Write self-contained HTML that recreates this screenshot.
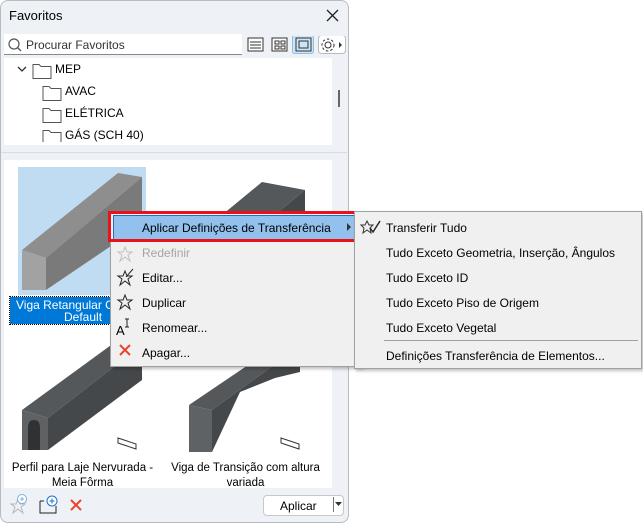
<!DOCTYPE html>
<html><head><meta charset="utf-8"><style>
*{margin:0;padding:0;box-sizing:border-box}
body{width:643px;height:523px;background:#fff;font-family:"Liberation Sans",sans-serif;font-size:12px;color:#000;position:relative;overflow:hidden}
.abs{position:absolute;white-space:nowrap}
.panel{left:0;top:0;width:349px;height:523px;background:#eef1f5;border:1px solid #b8bcc2;border-radius:8px}
.menu{background:#f0f0f0;border:1px solid #a0a0a0;box-shadow:2px 2px 3px rgba(0,0,0,.25)}
.t{font-size:12px}
.lbl{position:absolute;text-align:center;font-size:11.5px;line-height:15px;white-space:nowrap}
</style></head><body>
<div class="abs panel"></div>
<div class="abs" style="left:9px;top:8px;font-size:13px">Favoritos</div>
<svg class="abs" style="left:326px;top:9px" width="13" height="13"><path d="M1 1L12 12M12 1L1 12" stroke="#222" stroke-width="1.3"/></svg>
<div class="abs" style="left:4px;top:34px;width:238px;height:21px;background:#fff;border-bottom:1px solid #888"></div>
<svg class="abs" style="left:7px;top:37px" width="16" height="16"><circle cx="7" cy="7" r="5" fill="none" stroke="#555" stroke-width="1.2"/><path d="M10.5 10.5L14 14" stroke="#555" stroke-width="1.3"/></svg>
<div class="abs" style="left:26px;top:38px;color:#333">Procurar Favoritos</div>
<svg class="abs" style="left:247px;top:36px" width="100" height="18">
<rect x="1" y="2" width="15" height="13" fill="#fff" stroke="#333"/><path d="M3 6h11M3 9h11M3 12h11" stroke="#333"/>
<rect x="25" y="2" width="15" height="13" fill="#fff" stroke="#333"/><rect x="28" y="5" width="4" height="3" fill="none" stroke="#333"/><rect x="34" y="5" width="4" height="3" fill="none" stroke="#333"/><rect x="28" y="10" width="4" height="3" fill="none" stroke="#333"/><rect x="34" y="10" width="4" height="3" fill="none" stroke="#333"/>
<rect x="45.5" y="-0.5" width="21" height="18" rx="2" fill="#cce4f7" stroke="#8fbfe6"/><rect x="49" y="2" width="15" height="13" fill="none" stroke="#333"/><rect x="52" y="5" width="9" height="7" fill="none" stroke="#333"/>
<rect x="71.5" y="-0.5" width="27" height="18" rx="3" fill="#fff" stroke="#bbb"/><circle cx="81" cy="9" r="3" fill="none" stroke="#333"/><circle cx="81" cy="9" r="6" fill="none" stroke="#333" stroke-dasharray="2.5 2"/><path d="M92 6l3 3-3 3z" fill="#333"/>
</svg>
<div class="abs" style="left:4px;top:58px;width:328px;height:87px;background:#fff"></div>
<div class="abs" style="left:338px;top:90px;width:2px;height:17px;background:#666"></div>
<svg class="abs" style="left:15px;top:62px" width="60" height="80">
<path d="M3 5l4 4 4-4" stroke="#333" fill="none" stroke-width="1.3"/>
<path d="M18 2.5h6l2 2h10v12h-18z" fill="#fff" stroke="#555"/>
<path d="M28 24.5h6l2 2h10v12h-18z" fill="#fff" stroke="#555"/>
<path d="M28 46.5h6l2 2h10v12h-18z" fill="#fff" stroke="#555"/>
<path d="M28 68.5h6l2 2h10v10h-18z" fill="#fff" stroke="#555"/>
</svg>
<div class="abs" style="left:55px;top:62px">MEP</div>
<div class="abs" style="left:65px;top:84px">AVAC</div>
<div class="abs" style="left:65px;top:106px">ELÉTRICA</div>
<div class="abs" style="left:65px;top:128px">GÁS (SCH 40)</div>
<div class="abs" style="left:1px;top:152px;width:346px;height:1px;background:#d8dbe0"></div>
<div class="abs" style="left:4px;top:160px;width:328px;height:328px;background:#fff"></div>
<div class="abs" style="left:18px;top:167px;width:128px;height:128px;background:#c0dcf2"></div>
<svg class="abs" style="left:0;top:0" width="332" height="490">
<polygon points="22,250 118,173 142,177 46,258" fill="#8e8e8e"/>
<polygon points="46,258 142,177 142,225 46,290" fill="#7a7a7a"/>
<polygon points="22,250 46,258 46,290 22,290" fill="#a2a2a2"/>
<polygon points="165,262 262,182 305,190 208,270" fill="#55585a"/>
<polygon points="208,270 305,190 305,240 208,318" fill="#45484a"/>
<polygon points="22,410 118,340 142,345 48,418" fill="#55585a"/>
<polygon points="48,418 142,345 142,380 48,450" fill="#45484a"/>
<polygon points="22,410 48,418 48,450 22,450" fill="#5f6264"/>
<path d="M28 450v-22q0-8 6-8t6 8v22z" fill="#2f3133"/>
<polygon points="189,405 285,340 300,346 212,410" fill="#55585a"/>
<polygon points="212,410 300,346 300,372 275,378 240,392 212,452" fill="#45484a"/>
<polygon points="189,405 212,410 212,452 189,452" fill="#5f6264"/>
<path d="M118 438l18 6v5l-18-6z" fill="none" stroke="#333"/>
<path d="M281 438l18 6v5l-18-6z" fill="none" stroke="#333"/>
</svg>
<div class="abs" style="left:10px;top:297px;width:132px;height:27px;background:#0078d7;outline:1px dotted #000"></div>
<div class="lbl" style="left:16px;top:298px;color:#fff;font-size:12px">Viga Retangular G</div>
<div class="lbl" style="left:64px;top:310px;color:#fff;font-size:12px">Default</div>
<div class="lbl" style="left:5px;top:461px;width:155px">Perfil para Laje Nervurada -<br>Meia Fôrma</div>
<div class="lbl" style="left:168px;top:461px;width:155px">Viga de Transição com altura<br>variada</div>
<svg class="abs" style="left:8px;top:494px" width="80" height="22">
<path d="M10 5l2 5h5l-4 3 2 6-5-4-5 4 2-6-4-3h5z" fill="none" stroke="#b5b8bd"/><circle cx="14" cy="5" r="4.5" fill="#fff" stroke="#7aaee0"/><path d="M14 3v4M12 5h4" stroke="#7aaee0"/>
<path d="M32 7h4M32 7v12h16v-7" fill="none" stroke="#222"/><circle cx="44" cy="7" r="5" fill="#fff" stroke="#1a73c8"/><path d="M44 4.5v5M41.5 7h5" stroke="#1a73c8"/>
<path d="M63 6l10 10M73 6L63 16" stroke="#e8432a" stroke-width="2"/>
</svg>
<div class="abs" style="left:263px;top:495px;width:81px;height:21px;background:#fff;border:1px solid #c8c8c8;border-radius:4px"></div>
<div class="abs" style="left:280px;top:499px">Aplicar</div>
<div class="abs" style="left:333px;top:497px;width:1px;height:15px;background:#777"></div>
<svg class="abs" style="left:335px;top:501px" width="8" height="6"><path d="M0 1h7l-3.5 4z" fill="#333"/></svg>
<div class="abs menu" style="left:110px;top:212px;width:252px;height:155px"></div>
<div class="abs" style="left:113px;top:215px;width:242px;height:25px;background:#91c1ec;border:1px solid #2a6db5"></div>
<div class="abs" style="left:108px;top:211px;width:252px;height:31px;border:3px solid #e8121a"></div>
<div class="abs t" style="left:142px;top:221px">Aplicar Definições de Transferência</div>
<svg class="abs" style="left:347px;top:223px" width="5" height="8"><path d="M0 0l4 4-4 4z" fill="#333"/></svg>
<div class="abs t" style="left:142px;top:246px;color:#a5a5a5">Redefinir</div>
<div class="abs t" style="left:142px;top:271px">Editar...</div>
<div class="abs t" style="left:142px;top:296px">Duplicar</div>
<div class="abs t" style="left:142px;top:321px">Renomear...</div>
<div class="abs t" style="left:142px;top:346px">Apagar...</div>
<svg class="abs" style="left:116px;top:243px" width="22" height="122">
<path d="M9 4l2 5h5l-4 3 2 6-5-4-5 4 2-6-4-3h5z" fill="none" stroke="#c0c0c0"/>
<path d="M9 28l2 5h5l-4 3 2 6-5-4-5 4 2-6-4-3h5z" fill="none" stroke="#222"/><path d="M10 34l7-8" stroke="#222"/>
<path d="M9 52l2 5h5l-4 3 2 6-5-4-5 4 2-6-4-3h5z" fill="none" stroke="#222"/>
<text x="0" y="92" font-size="13" font-family="Liberation Sans">A</text><path d="M11 76v8M9 76h4M9 84h4" stroke="#222"/>
<path d="M4 102l10 10M14 102L4 112" stroke="#e8432a" stroke-width="2"/>
</svg>
<div class="abs menu" style="left:354px;top:211px;width:288px;height:158px"></div>
<svg class="abs" style="left:360px;top:219px" width="22" height="16"><path d="M7 2l2 4h4l-3 3 1 5-4-3-4 3 1-5-3-3h4z" fill="none" stroke="#333"/><path d="M10 9l3 4 7-11" fill="none" stroke="#222" stroke-width="1.4"/></svg>
<div class="abs t" style="left:386px;top:221px">Transferir Tudo</div>
<div class="abs t" style="left:386px;top:246px">Tudo Exceto Geometria, Inserção, Ângulos</div>
<div class="abs t" style="left:386px;top:271px">Tudo Exceto ID</div>
<div class="abs t" style="left:386px;top:296px">Tudo Exceto Piso de Origem</div>
<div class="abs t" style="left:386px;top:321px">Tudo Exceto Vegetal</div>
<div class="abs" style="left:384px;top:340px;width:254px;height:1px;background:#a0a0a0"></div>
<div class="abs t" style="left:386px;top:349px">Definições Transferência de Elementos...</div>
</body></html>
